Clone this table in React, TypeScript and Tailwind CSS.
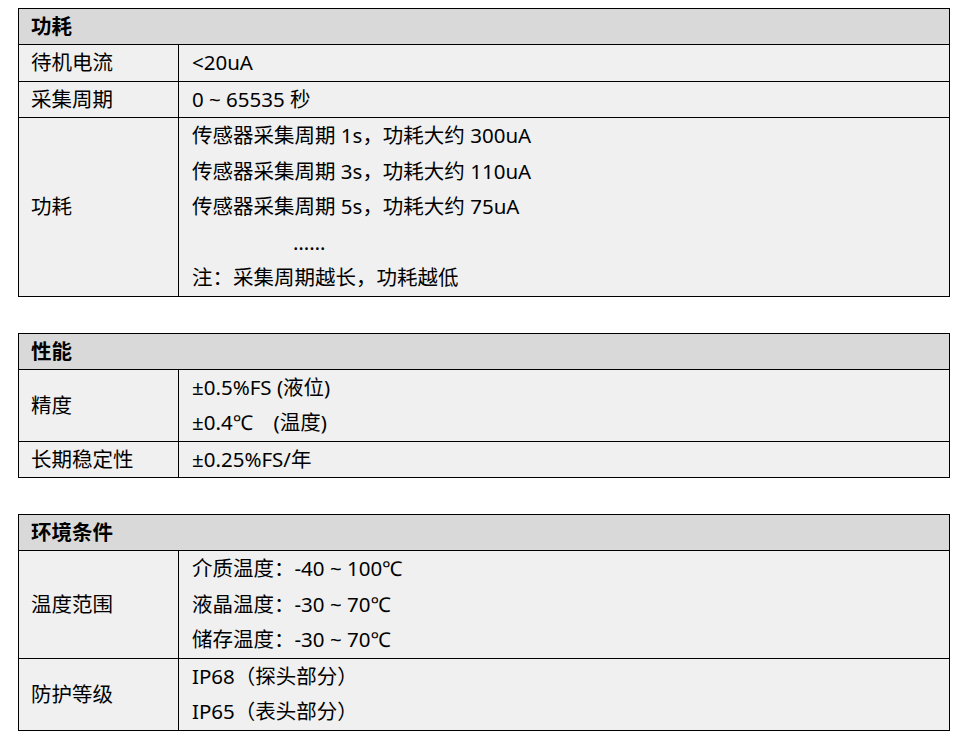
const sections = [
  {
    title: '功耗',
    rows: [
      { label: '待机电流', lines: ['<20uA'] },
      { label: '采集周期', lines: ['0 ~ 65535 秒'] },
      {
        label: '功耗',
        lines: [
          '传感器采集周期 1s，功耗大约 300uA',
          '传感器采集周期 3s，功耗大约 110uA',
          '传感器采集周期 5s，功耗大约 75uA',
          '……',
          '注：采集周期越长，功耗越低',
        ],
      },
    ],
  },
  {
    title: '性能',
    rows: [
      { label: '精度', lines: ['±0.5%FS (液位)', '±0.4℃　(温度)'] },
      { label: '长期稳定性', lines: ['±0.25%FS/年'] },
    ],
  },
  {
    title: '环境条件',
    rows: [
      { label: '温度范围', lines: ['介质温度：-40 ~ 100℃', '液晶温度：-30 ~ 70℃', '储存温度：-30 ~ 70℃'] },
      { label: '防护等级', lines: ['IP68（探头部分）', 'IP65（表头部分）'] },
    ],
  },
];

const SpecTable = ({ title, rows }: (typeof sections)[number]) => (
  <table className="w-[932px] border-collapse table-fixed">
    <colgroup>
      <col className="w-[160px]" />
      <col />
    </colgroup>
    <thead>
      <tr>
        <th colSpan={2} className="h-[36px] bg-[#d9d9d9] border border-black text-left font-bold pl-3 py-0">
          {title}
        </th>
      </tr>
    </thead>
    <tbody>
      {rows.map((row, index) => (
        <tr key={index} className="bg-[#f0f0f0]">
          <td className="border border-black pl-3 align-middle">{row.label}</td>
          <td className="border border-black pl-[13px]">
            {row.lines.map((line, idx) => (
              <div key={idx} className={`h-[35.5px] leading-[35.5px] whitespace-pre ${line === '……' ? 'pl-[101px]' : ''}`}>
                {line}
              </div>
            ))}
          </td>
        </tr>
      ))}
    </tbody>
  </table>
);

const App = () => {
  return (
    <div className="min-h-screen bg-white pt-2 pl-[18px] text-[20.5px] text-black font-['Noto_Sans','Noto_Sans_CJK_SC',sans-serif]">
      <div className="flex flex-col gap-[36px]">
        {sections.map((section, index) => (
          <SpecTable key={index} {...section} />
        ))}
      </div>
    </div>
  );
};

export default App;
